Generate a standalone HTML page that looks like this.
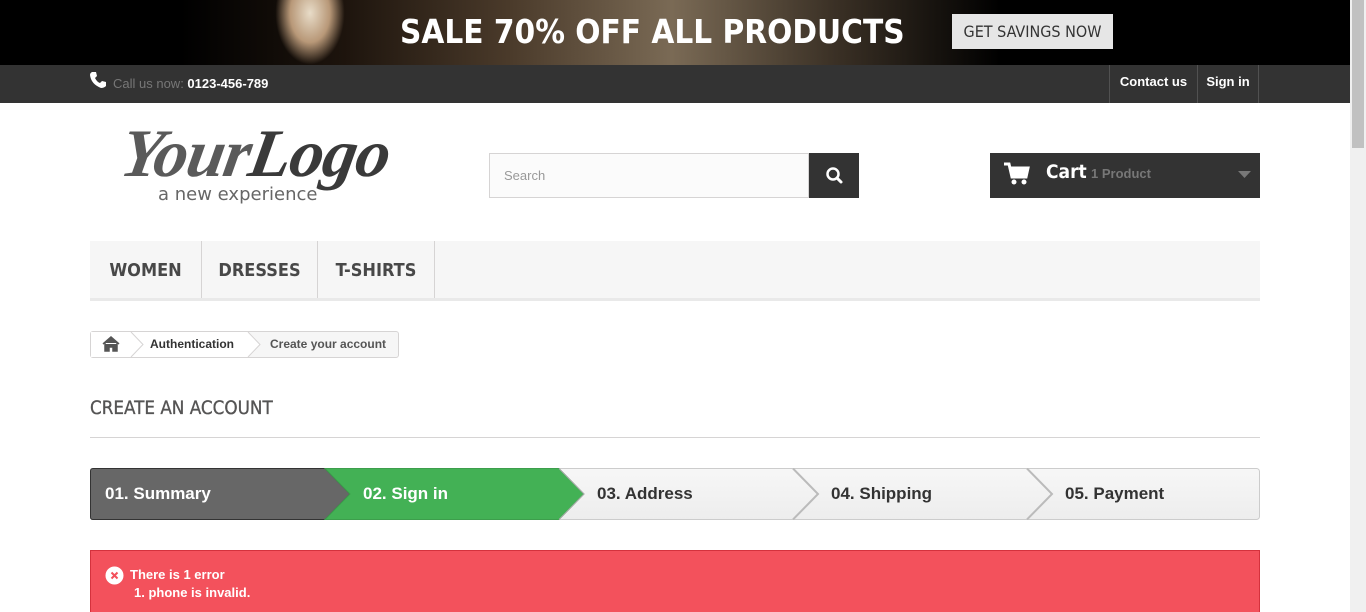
<!DOCTYPE html>
<html><head><meta charset="utf-8"><style>
*{margin:0;padding:0;box-sizing:border-box}
body{width:1366px;height:612px;overflow:hidden;background:#fff;font-family:"Liberation Sans",Arial,sans-serif;position:relative}
.abs{position:absolute}
.banner{left:0;top:0;width:1350px;height:65px;background:#000;overflow:hidden}
.banner .img{left:180px;top:0;width:820px;height:65px;background:linear-gradient(90deg,#000 0%,#1d140d 20%,#4a3a2a 40%,#7a6a55 60%,#3a3025 80%,#000 100%)}
.banner .sale{left:400px;top:10px;color:#fff;font-size:33px;line-height:44px;font-weight:bold;font-family:"DejaVu Sans Condensed","Liberation Sans",sans-serif;white-space:nowrap}
.banner .btn{left:952px;top:14px;width:161px;height:35px;background:#e6e6e6;color:#333;font-size:16px;line-height:35px;text-align:center;font-family:"DejaVu Sans Condensed",sans-serif}
.nav{left:0;top:65px;width:1350px;height:38px;background:#333}
.call{left:113px;top:76px;color:#777;font-size:13px}
.call b{color:#fff}
.toplink{top:65px;height:38px;border-left:1px solid #515151;color:#fff;font-weight:bold;font-size:13px;line-height:34px;text-align:center}
.sb{left:1350px;top:0;width:16px;height:612px;background:#f0f0f0}
.sb div{position:absolute;left:2px;top:0;width:12px;height:148px;background:#c1c1c1}
.search{left:489px;top:153px;width:320px;height:45px;border:1px solid #d6d4d4;background:#fbfbfb;color:#999;font-size:13px;line-height:43px;padding-left:14px}
.sbtn{left:809px;top:153px;width:50px;height:45px;background:#333}
.cart{left:990px;top:153px;width:270px;height:45px;background:#333;color:#fff}
.menu{left:90px;top:241px;width:1170px;height:60px;background:#f6f6f6;border-bottom:3px solid #e9e9e9}
.mi{top:241px;height:57px;border-right:1px solid #d6d4d4;color:#484848;font-size:18px;line-height:59px;font-weight:600;font-family:"DejaVu Sans Condensed",sans-serif;text-align:center}
.bc{left:90px;top:331px;width:309px;height:27px;border:1px solid #d6d4d4;border-radius:3px;background:#f6f6f6;font-size:12px;font-weight:bold;line-height:24px}
h1{position:absolute;left:90px;top:398px;font-size:18.7px;font-weight:normal;color:#555454;font-family:"DejaVu Sans Condensed",sans-serif;-webkit-text-stroke:0.3px #555454}
.hr{left:90px;top:437px;width:1170px;height:1px;background:#d6d4d4}
.err{left:90px;top:550px;width:1170px;height:62px;background:#f3515c;border:1px solid #d4323d;border-bottom:none;color:#fff;font-weight:bold;font-size:13px}
</style></head><body>
<div class="abs banner"><div class="abs img"></div>
<div class="abs" style="left:275px;top:0;width:70px;height:65px;background:radial-gradient(ellipse at 50% 20%,#e8dcc8 0%,#b89878 40%,transparent 70%)"></div>
<div class="abs sale">SALE 70% OFF ALL PRODUCTS</div><div class="abs btn">GET SAVINGS NOW</div></div>
<div class="abs nav"></div>
<svg class="abs" style="left:89px;top:71px" width="18" height="18" viewBox="0 0 18 18"><path d="M3 1 L7 1 L8 5 L6 7 Q8 11 11 12 L13 10 L17 11 L17 15 Q15 17 12 17 Q2 13 1 4 Q1 2 3 1Z" fill="#fff"/></svg>
<div class="abs call">Call us now: <b>0123-456-789</b></div>
<div class="abs toplink" style="left:1109px;width:88px">Contact us</div>
<div class="abs toplink" style="left:1197px;width:62px;border-right:1px solid #515151">Sign in</div>
<div class="abs sb"><div></div></div>
<div class="abs" style="left:115px;top:114px;font-family:'Liberation Serif',serif;font-style:italic;font-weight:bold;font-size:68px;color:#5a5a5a;letter-spacing:-1px;transform:skewX(-10deg);transform-origin:0 100%">Your<span style="color:#3a3a3a">Logo</span></div>
<div class="abs" style="left:158px;top:184px;font-size:18px;color:#666;font-family:'DejaVu Sans',sans-serif">a new experience</div>
<div class="abs search">Search</div>
<div class="abs sbtn"><svg width="50" height="45"><circle cx="24" cy="21" r="5.5" stroke="#fff" stroke-width="2.5" fill="none"/><path d="M28 25 L32 29" stroke="#fff" stroke-width="3" stroke-linecap="round"/></svg></div>
<div class="abs cart"><svg class="abs" style="left:14px;top:9px" width="26" height="24" viewBox="0 0 26 24"><path d="M0 2 H5 L8 15 H22 L24 6 H7" fill="none" stroke="#fff" stroke-width="3"/><rect x="7" y="6" width="16" height="8" fill="#fff"/><circle cx="10" cy="20" r="2.5" fill="#fff"/><circle cx="20" cy="20" r="2.5" fill="#fff"/></svg>
<span class="abs" style="left:56px;top:8px;font-size:19px;font-weight:600;font-family:'DejaVu Sans Condensed',sans-serif">Cart</span>
<span class="abs" style="left:101px;top:13px;font-size:13px;color:#777;font-weight:bold">1 Product</span>
<svg class="abs" style="left:248px;top:18px" width="13" height="8"><path d="M0 0 H13 L6.5 7Z" fill="#777"/></svg></div>
<div class="abs menu"></div>
<div class="abs mi" style="left:90px;width:112px">WOMEN</div>
<div class="abs mi" style="left:202px;width:116px">DRESSES</div>
<div class="abs mi" style="left:318px;width:117px">T-SHIRTS</div>
<div class="abs bc"><div class="abs" style="left:0;top:0;width:158px;height:25px;background:#fff"></div>
<svg class="abs" style="left:0;top:0" width="170" height="25"><path d="M40 0 L52 12.5 L40 25" fill="#fff" stroke="#d6d4d4"/><path d="M157 0 L169 12.5 L157 25" fill="#fff" stroke="#d6d4d4"/><path d="M12 12 L20 5 L28 12 M14 11 V19 H18 V15 H22 V19 H26 V11" fill="#555" stroke="#555" stroke-width="1.5"/></svg>
<span class="abs" style="left:59px;color:#333">Authentication</span><span class="abs" style="left:179px;color:#555">Create your account</span></div>
<h1>CREATE AN ACCOUNT</h1>
<div class="abs hr"></div>
<svg class="abs" style="left:90px;top:468px" width="1171" height="52" viewBox="0 0 1171 52">
<defs><linearGradient id="g" x1="0" y1="0" x2="0" y2="1"><stop offset="0" stop-color="#f7f7f7"/><stop offset="1" stop-color="#ededed"/></linearGradient></defs>
<rect x="0.5" y="0.5" width="1169" height="51" rx="3" fill="url(#g)" stroke="#ccc"/>
<path d="M3 0.5 H235 L260 26 L235 51.5 H3 Q0.5 51.5 0.5 49 V3 Q0.5 0.5 3 0.5Z" fill="#676767" stroke="#333"/>
<path d="M235 0.5 H469 L494 26 L469 51.5 H235 L260 26Z" fill="#43b155" stroke="#3d9e4c"/>
<path d="M469 0.5 L494 26 L469 51.5" fill="none" stroke="#aaa"/>
<path d="M703 0.5 L728 26 L703 51.5" fill="none" stroke="#bbb" stroke-width="2"/>
<path d="M937 0.5 L962 26 L937 51.5" fill="none" stroke="#bbb" stroke-width="2"/>
<g font-family="Liberation Sans,Arial,sans-serif" font-weight="bold" font-size="17">
<text x="15" y="31" fill="#fff">01. Summary</text>
<text x="273" y="31" fill="#fff">02. Sign in</text>
<text x="507" y="31" fill="#333">03. Address</text>
<text x="741" y="31" fill="#333">04. Shipping</text>
<text x="975" y="31" fill="#333">05. Payment</text></g></svg>
<div class="abs err"><svg class="abs" style="left:14px;top:15px" width="19" height="19"><circle cx="9.5" cy="9.5" r="9" fill="#fff"/><path d="M6.5 6.5 L12.5 12.5 M12.5 6.5 L6.5 12.5" stroke="#f3515c" stroke-width="2"/></svg>
<span class="abs" style="left:39px;top:16px">There is 1 error</span><span class="abs" style="left:43px;top:34px">1. phone is invalid.</span></div>
</body></html>
